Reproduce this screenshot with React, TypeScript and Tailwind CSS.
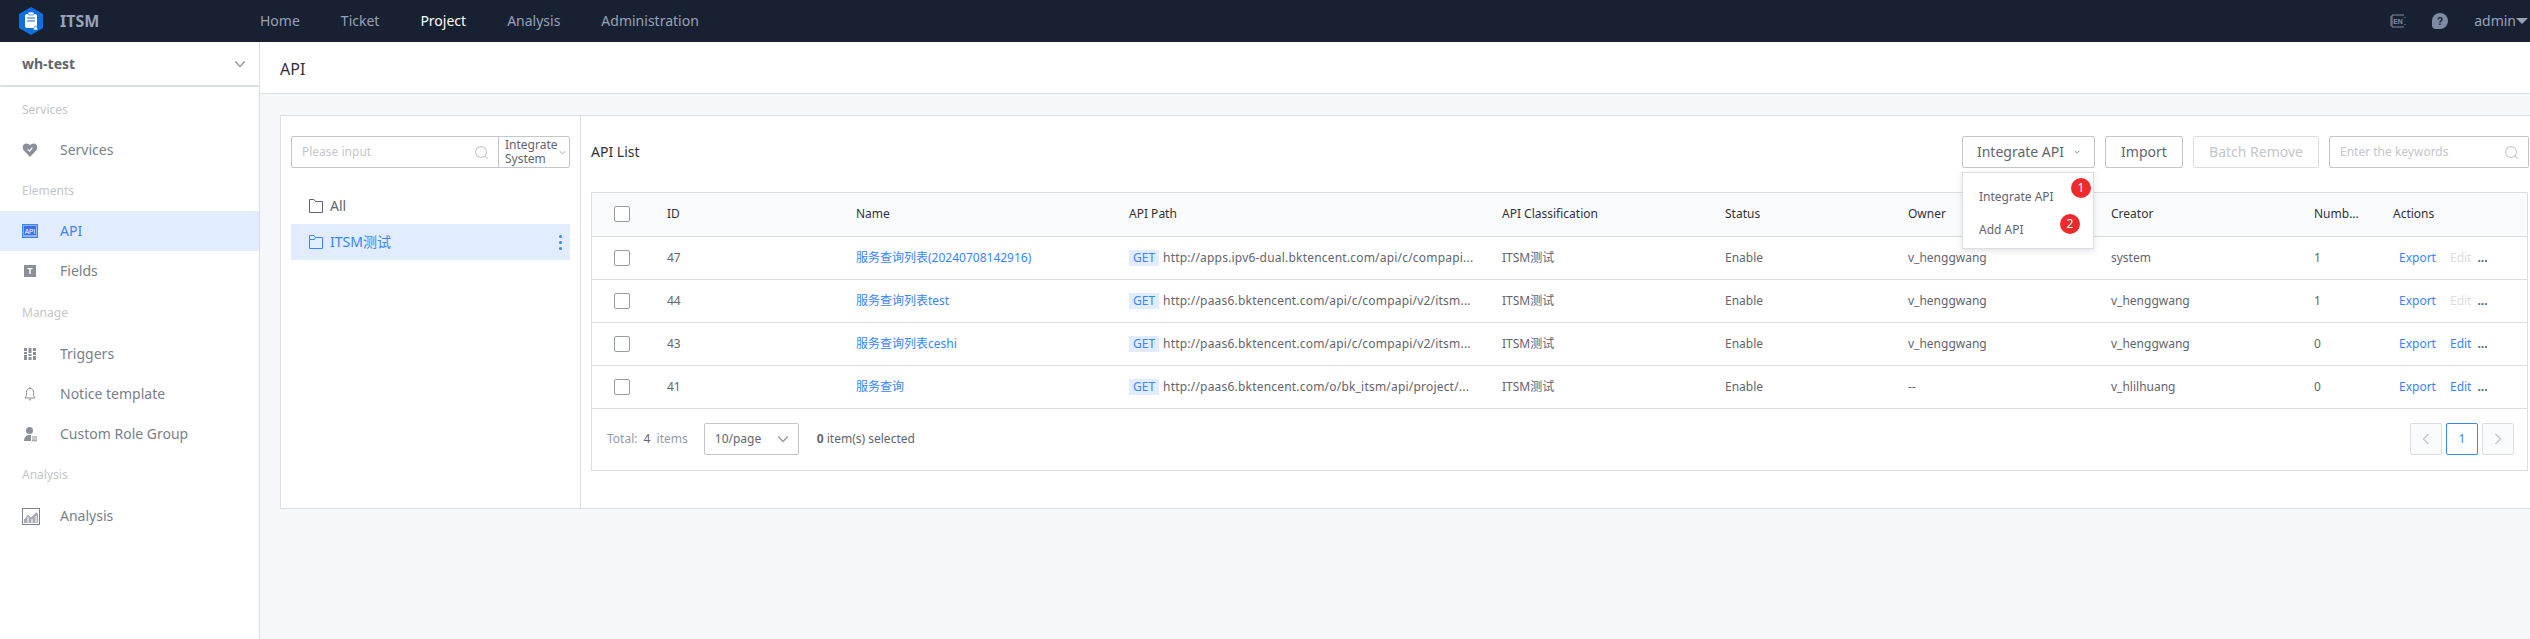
import React from 'react';

type Row = {
  id: number;
  name: string;
  path: string;
  owner: string;
  creator: string;
  count: number;
  editable: boolean;
};

const rows: Row[] = [
  {
    id: 47,
    name: '服务查询列表(20240708142916)',
    path: 'http://apps.ipv6-dual.bktencent.com/api/c/compapi...',
    owner: 'v_henggwang',
    creator: 'system',
    count: 1,
    editable: false,
  },
  {
    id: 44,
    name: '服务查询列表test',
    path: 'http://paas6.bktencent.com/api/c/compapi/v2/itsm...',
    owner: 'v_henggwang',
    creator: 'v_henggwang',
    count: 1,
    editable: false,
  },
  {
    id: 43,
    name: '服务查询列表ceshi',
    path: 'http://paas6.bktencent.com/api/c/compapi/v2/itsm...',
    owner: 'v_henggwang',
    creator: 'v_henggwang',
    count: 0,
    editable: true,
  },
  {
    id: 41,
    name: '服务查询',
    path: 'http://paas6.bktencent.com/o/bk_itsm/api/project/...',
    owner: '--',
    creator: 'v_hlilhuang',
    count: 0,
    editable: true,
  },
];

const Logo = () => (
  <svg width="26" height="30" viewBox="0 0 26 30">
    <path d="M13 1 25 8v14l-12 7-12-7V8z" fill="#0f6fe0" />
    <rect x="7" y="8" width="12" height="14" rx="2" fill="#fff" />
    <rect x="10" y="6" width="6" height="3" rx="1" fill="#fff" stroke="#0f6fe0" strokeWidth="0.7" />
    <path d="M9 12h8M9 15h8" stroke="#0f6fe0" strokeWidth="1.2" />
    <path d="M15 24l2-4 2 1 1 3z" fill="#fff" stroke="#0f6fe0" strokeWidth="0.6" />
  </svg>
);

const HeartIcon = () => (
  <svg width="16" height="16" viewBox="0 0 16 16">
    <path d="M8 15 1.6 8.2C-.4 5.8 1 1.6 4.4 1.6 6 1.6 7.2 2.4 8 3.4c.8-1 2-1.8 3.6-1.8 3.4 0 4.8 4.2 2.8 6.600z" fill="#8a8f99" />
    <path d="M5.600 7.400 7.600 9.200 10.400 5.600" fill="none" stroke="#fff" strokeWidth="1.2" />
  </svg>
);

const ApiIcon = () => (
  <svg width="16" height="16" viewBox="0 0 16 16">
    <rect x="0.5" y="1.5" width="15" height="13" fill="#8fb4ff" stroke="#3a84ff" />
    <rect x="2" y="3" width="12" height="9" fill="#3a6ff0" />
    <text x="8" y="10.5" textAnchor="middle" fontSize="6.5" fontFamily="Liberation Sans, sans-serif" fill="#fff">API</text>
  </svg>
);

const FieldIcon = () => (
  <svg width="16" height="16" viewBox="0 0 16 16">
    <rect x="2" y="2" width="12" height="12" fill="#8a8f99" />
    <path d="M5.500 5h5v1.200H8.700V11H7.300V6.200H5.500z" fill="#fff" />
  </svg>
);

const TriggerIcon = () => (
  <svg width="16" height="16" viewBox="0 0 16 16" fill="#8a8f99">
    <rect x="2" y="2" width="3" height="3" />
    <rect x="2" y="6" width="3" height="2" />
    <rect x="2" y="9" width="3" height="5" />
    <rect x="6.500" y="2" width="3" height="5" />
    <rect x="6.500" y="8" width="3" height="2" />
    <rect x="6.500" y="11" width="3" height="3" />
    <rect x="11" y="2" width="3" height="3" />
    <rect x="11" y="6" width="3" height="3" />
    <rect x="11" y="10" width="3" height="4" />
  </svg>
);

const BellIcon = () => (
  <svg width="16" height="16" viewBox="0 0 16 16" fill="none" stroke="#8a8f99" strokeWidth="1">
    <path d="M8 2.500c-2.400 0-3.600 1.800-3.600 4v3.200L3 12h10l-1.400-2.300V6.500c0-2.200-1.200-4-3.600-4z" />
    <path d="M8 1v1.500M6.800 13.800h2.400" />
  </svg>
);

const RoleIcon = () => (
  <svg width="16" height="16" viewBox="0 0 16 16" fill="#8a8f99">
    <circle cx="7.500" cy="4.500" r="3.500" />
    <path d="M2 15c0-3.500 1.800-5.500 4-6h3v6z" />
    <path d="M10 10.500h5v1h-5zM10 12.500h5v1h-5zM10 14.300h5v1h-5z" />
  </svg>
);

const ChartIcon = () => (
  <svg width="18" height="17" viewBox="0 0 18 17">
    <rect x="0.500" y="0.500" width="17" height="16" fill="#fff" stroke="#7d828c" />
    <path d="M2 11 6 6l3 3 5-5 2 2v9H2z" fill="#a9adb5" />
    <path d="M2 11 6 6l3 3 5-5" fill="none" stroke="#fff" strokeWidth="1" />
    <path d="M6 9v6M10 11v4M14 8v7" stroke="#fff" strokeWidth="1" />
  </svg>
);

const SearchIcon = () => (
  <svg width="15" height="15" viewBox="0 0 16 16" fill="none" stroke="#c4c6cc" strokeWidth="1.200">
    <circle cx="7.500" cy="7.500" r="5.800" />
    <path d="m11.800 11.800 2.700 2.700" />
  </svg>
);

const Chevron = ({ size = 10, color = '#979ba5' }: { size?: number; color?: string }) => (
  <svg width={size} height={size} viewBox="0 0 10 10" fill="none" stroke={color} strokeWidth="1.200">
    <path d="M1 3l4 4 4-4" />
  </svg>
);

const FolderIcon = ({ color, open }: { color: string; open?: boolean }) => (
  <svg width="14" height="16" viewBox="0 0 14 16" fill="none" stroke={color} strokeWidth="1">
    <path d="M.5 1.500h4.500l1.500 2h7v11H.5z" />
    {open && <path d="M.5 5.500h5l1-2" />}
  </svg>
);

const Checkbox = () => (
  <span className="block w-4 h-4 border border-[#979ba5] rounded-[2px] bg-white" />
);

const NavItem = ({ icon, label, active }: { icon: React.ReactNode; label: string; active?: boolean }) => (
  <div className={`flex items-center h-10 pl-[22px] text-sm ${active ? 'bg-[#e1ecff] text-[#3a84ff]' : 'text-[#7a7f8a]'}`}>
    <span className="w-[38px] flex items-center">{icon}</span>
    {label}
  </div>
);

const GroupLabel = ({ label, className = 'h-[41px]' }: { label: string; className?: string }) => (
  <div className={`${className} pl-[22px] flex items-center text-xs text-[#c4c6cc]`}>{label}</div>
);

const Sidebar = () => (
  <aside className="w-[260px] shrink-0 bg-white border-r border-[#dcdee5]">
    <div className="h-[45px] pl-[22px] pr-[13px] flex items-center justify-between border-b-2 border-[#dcdee5] rounded-b-[2px]">
      <span className="text-sm font-bold text-[#63656e]">wh-test</span>
      <Chevron size={12} />
    </div>
    <div className="pt-[2px]">
      <GroupLabel label="Services" />
      <NavItem icon={<HeartIcon />} label="Services" />
      <GroupLabel label="Elements" />
      <NavItem icon={<ApiIcon />} label="API" active />
      <NavItem icon={<FieldIcon />} label="Fields" />
      <GroupLabel label="Manage" className="h-[43px]" />
      <NavItem icon={<TriggerIcon />} label="Triggers" />
      <NavItem icon={<BellIcon />} label="Notice template" />
      <NavItem icon={<RoleIcon />} label="Custom Role Group" />
      <GroupLabel label="Analysis" className="h-[42px]" />
      <NavItem icon={<ChartIcon />} label="Analysis" />
    </div>
  </aside>
);

const TopBar = () => (
  <header className="h-[42px] shrink-0 bg-[#182132] flex items-center text-sm text-[#96a2b9]">
    <div className="w-[260px] pl-[18px] flex items-center">
      <Logo />
      <span className="ml-[16px] text-base font-bold">ITSM</span>
    </div>
    <nav className="flex gap-[41px]">
      <span>Home</span>
      <span>Ticket</span>
      <span className="text-white">Project</span>
      <span>Analysis</span>
      <span>Administration</span>
    </nav>
    <div className="ml-auto flex items-center pr-[2px]">
      <svg width="16" height="18" viewBox="0 0 16 18" fill="none" stroke="#7f8ba3" strokeWidth="1">
        <path d="M14 3H2v12h12" />
        <path d="M1 4v10M15 5v1M15 12v1" />
        <text x="8" y="11.500" textAnchor="middle" fontSize="7" fontWeight="700" stroke="none" fill="#7f8ba3" fontFamily="Liberation Sans, sans-serif">EN</text>
      </svg>
      <svg className="ml-[26px]" width="16" height="16" viewBox="0 0 16 16">
        <path d="M8 0a8 8 0 0 1 8 8 8 8 0 0 1-8 8H3.500C1.500 16 0 14.500 0 12.500V8a8 8 0 0 1 8-8z" fill="#7f8ba3" />
        <text x="8" y="12" textAnchor="middle" fontSize="10" fontWeight="700" fill="#182132" fontFamily="Liberation Sans, sans-serif">?</text>
      </svg>
      <span className="ml-[26px] text-[#96a2b9]">admin</span>
      <span className="w-0 h-0 border-x-[6px] border-x-transparent border-t-[6px] border-t-[#96a2b9]" />
    </div>
  </header>
);

const TreePanel = () => (
  <div className="w-[300px] shrink-0 border-r border-[#dcdee5] px-[10px] pt-5">
    <div className="flex h-8 border border-[#c4c6cc] rounded-[2px]">
      <div className="flex-1 flex items-center justify-between pl-[10px] pr-[9px] text-xs text-[#c4c6cc]">
        <span>Please input</span>
        <SearchIcon />
      </div>
      <div className="w-[71px] border-l border-[#c4c6cc] pl-[6px] flex items-center justify-between pr-[3px] text-xs leading-[14px] text-[#63656e]">
        <span>
          Integrate
          <br />
          System
        </span>
        <Chevron size={7} />
      </div>
    </div>
    <div className="mt-5 h-9 flex items-center pl-[18px] text-sm text-[#63656e] gap-[7px]">
      <FolderIcon color="#63656e" />
      All
    </div>
    <div className="h-9 flex items-center pl-[18px] pr-[8px] text-sm text-[#3a84ff] bg-[#e1ecff] gap-[7px]">
      <FolderIcon color="#3a84ff" open />
      ITSM测试
      <span className="ml-auto flex flex-col gap-[3px]">
        <span className="w-[3px] h-[3px] rounded-full bg-[#3a84ff]" />
        <span className="w-[3px] h-[3px] rounded-full bg-[#3a84ff]" />
        <span className="w-[3px] h-[3px] rounded-full bg-[#3a84ff]" />
      </span>
    </div>
  </div>
);

const ApiTable = () => (
  <table className="w-[1935px] table-fixed text-xs text-[#63656e] border-collapse">
    <colgroup>
      <col className="w-[60px]" />
      <col className="w-[189px]" />
      <col className="w-[273px]" />
      <col className="w-[373px]" />
      <col className="w-[223px]" />
      <col className="w-[183px]" />
      <col className="w-[203px]" />
      <col className="w-[203px]" />
      <col className="w-[79px]" />
      <col className="w-[149px]" />
    </colgroup>
    <thead>
      <tr className="h-[43px] bg-[#fafbfd] border-b border-[#dcdee5] text-[#313238]">
        <th className="pl-[22px] font-normal">
          <Checkbox />
        </th>
        {['ID', 'Name', 'API Path', 'API Classification', 'Status', 'Owner', 'Creator', 'Numb...', 'Actions'].map((h) => (
          <th key={h} className="pl-[15px] text-left font-normal">
            {h}
          </th>
        ))}
      </tr>
    </thead>
    <tbody>
      {rows.map((r) => (
        <tr key={r.id} className="h-[43px] border-b border-[#dcdee5]">
          <td className="pl-[22px]">
            <Checkbox />
          </td>
          <td className="pl-[15px]">{r.id}</td>
          <td className="pl-[15px] text-[#3a84ff]">{r.name}</td>
          <td className="pl-[15px]">
            <div className="flex items-center">
              <span className="shrink-0 h-4 px-[4px] leading-4 bg-[#e1ecff] text-[#3a84ff] mr-[4px]">GET</span>
              <span className="whitespace-nowrap tracking-[0.2px]">{r.path}</span>
            </div>
          </td>
          <td className="pl-[15px]">ITSM测试</td>
          <td className="pl-[15px]">Enable</td>
          <td className="pl-[15px]">{r.owner}</td>
          <td className="pl-[15px]">{r.creator}</td>
          <td className="pl-[15px]">{r.count}</td>
          <td className="pl-[21px]">
            <div className="flex items-center">
              <span className="text-[#3a84ff]">Export</span>
              <span className={`ml-[14px] ${r.editable ? 'text-[#3a84ff]' : 'text-[#dcdee5]'}`}>Edit</span>
              <span className="ml-[6px] text-[#63656e] font-bold">...</span>
            </div>
          </td>
        </tr>
      ))}
    </tbody>
  </table>
);

const PageButton = ({ children, active }: { children: React.ReactNode; active?: boolean }) => (
  <span
    className={`w-8 h-8 flex items-center justify-center rounded-[2px] border text-xs ${
      active ? 'border-[#3a84ff] text-[#3a84ff] bg-white' : 'border-[#dcdee5] bg-[#fafbfd]'
    }`}
  >
    {children}
  </span>
);

const Footer = () => (
  <div className="h-[61px] flex items-center pl-[15px] pr-[13px] text-xs text-[#63656e]">
    <span className="text-[#979ba5]">
      Total: <span className="text-[#63656e] mx-[3px]">4</span> items
    </span>
    <div className="ml-[16px] w-[95px] h-8 border border-[#c4c6cc] rounded-[2px] flex items-center justify-between pl-[10px] pr-[9px]">
      10/page
      <Chevron size={12} />
    </div>
    <span className="ml-[18px]">
      <span className="font-bold">0</span> item(s) selected
    </span>
    <div className="ml-auto flex gap-[4px]">
      <PageButton>
        <svg width="8" height="12" viewBox="0 0 8 12" fill="none" stroke="#c4c6cc" strokeWidth="1.400">
          <path d="M6.500 1 1.500 6l5 5" />
        </svg>
      </PageButton>
      <PageButton active>1</PageButton>
      <PageButton>
        <svg width="8" height="12" viewBox="0 0 8 12" fill="none" stroke="#c4c6cc" strokeWidth="1.400">
          <path d="M1.500 1l5 5-5 5" />
        </svg>
      </PageButton>
    </div>
  </div>
);

const Toolbar = () => (
  <div className="w-[1938px] h-[76px] flex pt-5 items-start text-sm">
    <span className="text-sm text-[#313238] leading-8">API List</span>
    <div className="relative ml-auto">
      <button className="w-[133px] h-8 flex items-center justify-center gap-[10px] border border-[#c4c6cc] rounded-[2px] text-[#63656e]">
        Integrate API
        <Chevron size={6} color="#63656e" />
      </button>
      {/* open dropdown with the two numbered callouts */}
      <div className="absolute z-10 left-0 top-[36px] w-[132px] h-[77px] bg-white border border-[#dcdee5] shadow-[0_2px_6px_rgba(0,0,0,0.12)] text-xs text-[#63656e] pl-[16px] pt-[7px]">
        <div className="h-[33px] flex items-center">Integrate API</div>
        <div className="h-[33px] flex items-center">Add API</div>
        <span className="absolute left-[108px] top-[5px] w-5 h-5 rounded-full bg-[#ee2a2a] text-white flex items-center justify-center text-xs">1</span>
        <span className="absolute left-[97px] top-[41px] w-5 h-5 rounded-full bg-[#ee2a2a] text-white flex items-center justify-center text-xs">2</span>
      </div>
    </div>
    <button className="ml-[10px] w-[78px] h-8 border border-[#c4c6cc] rounded-[2px] text-[#63656e]">Import</button>
    <button className="ml-[10px] w-[126px] h-8 border border-[#dcdee5] rounded-[2px] text-[#c4c6cc]">Batch Remove</button>
    <div className="ml-[10px] w-[200px] h-8 border border-[#c4c6cc] rounded-[2px] flex items-center justify-between pl-[10px] pr-[9px] text-xs text-[#c4c6cc]">
      Enter the keywords
      <SearchIcon />
    </div>
  </div>
);

export default function App() {
  return (
    <div className="h-[639px] w-[2530px] overflow-hidden flex flex-col font-['Noto_Sans','Noto_Sans_CJK_SC',sans-serif]">
      <TopBar />
      <div className="flex flex-1 min-h-0">
        <Sidebar />
        <main className="flex-1 min-w-0 bg-[#f5f7fb]">
          <div className="h-[52px] bg-white border-b border-[#dcdee5] pl-[20px] pt-[2px] flex items-center text-base text-[#313238]">API</div>
          <div className="pl-[20px] pt-[21px]">
            <div className="w-[2270px] h-[394px] flex bg-white border border-[#dcdee5]">
              <TreePanel />
              <div className="flex-1 pl-[10px]">
                <div className="w-[1937px]">
                  <Toolbar />
                  <div className="border border-[#dcdee5]">
                    <ApiTable />
                    <Footer />
                  </div>
                </div>
              </div>
            </div>
          </div>
        </main>
      </div>
    </div>
  );
}
